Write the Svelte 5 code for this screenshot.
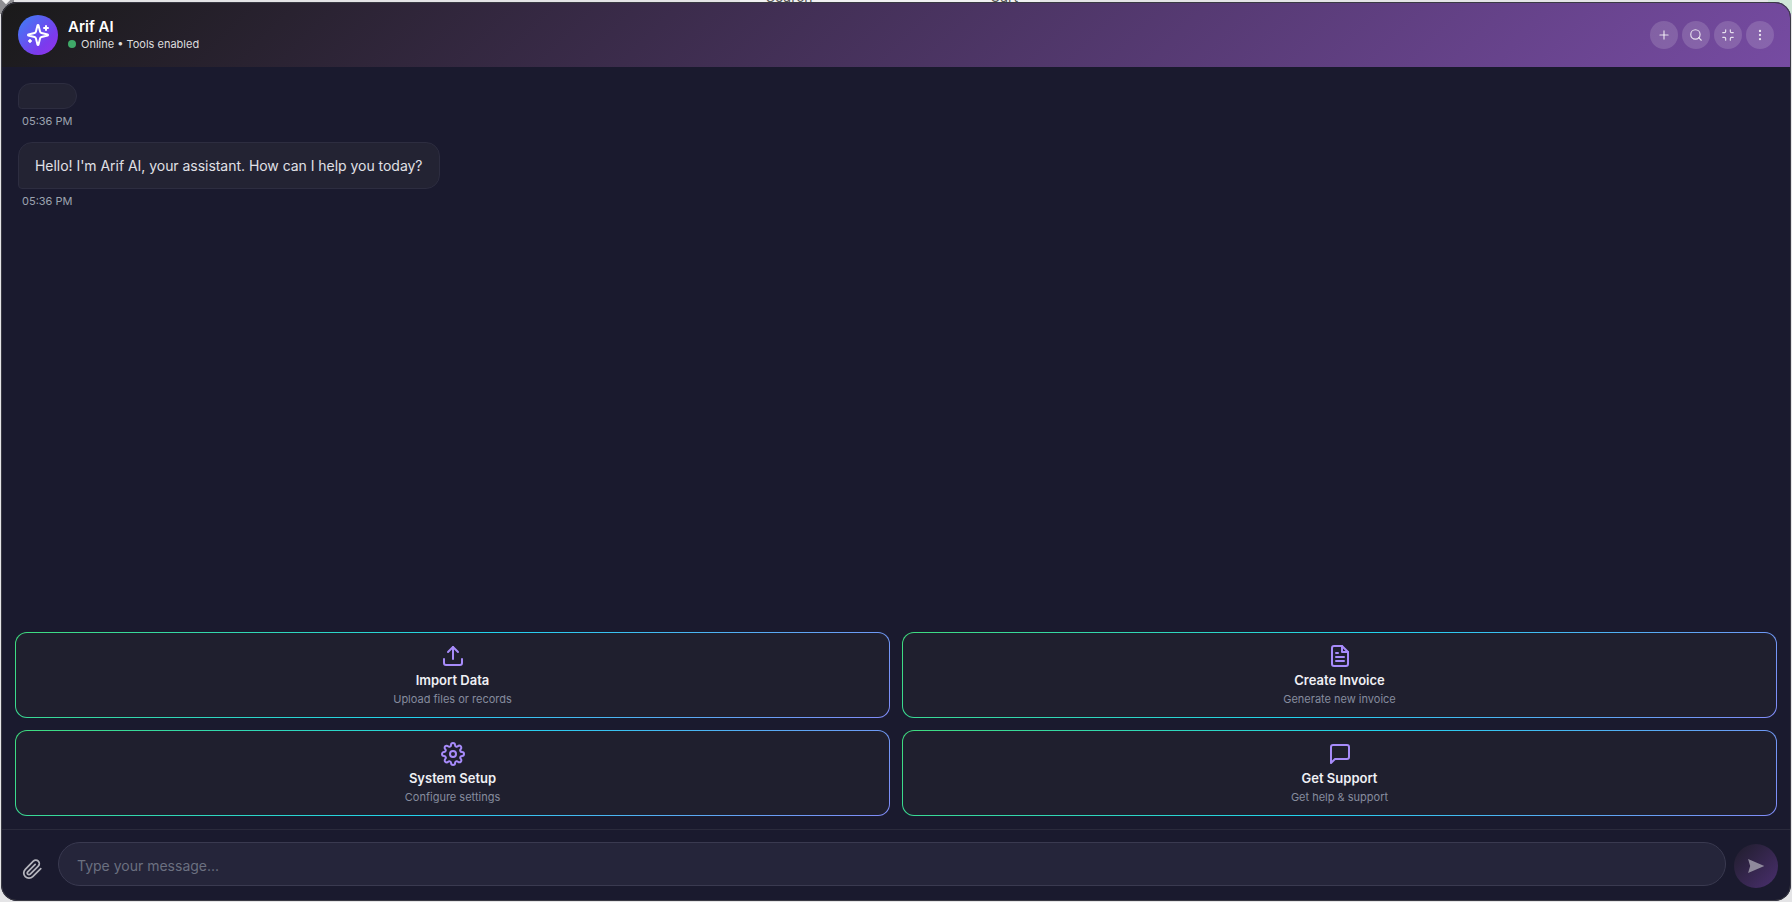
<script>
  const actions = [
    { id: "upload", title: "Import Data", sub: "Upload files or records" },
    { id: "invoice", title: "Create Invoice", sub: "Generate new invoice" },
    { id: "gear", title: "System Setup", sub: "Configure settings" },
    { id: "chat", title: "Get Support", sub: "Get help & support" }
  ];

  let draft = $state("");
</script>

<div class="page">
  <div class="behind" aria-hidden="true">
    <div class="strip">
      <span class="behind-link search">Search</span>
      <span class="behind-link cart">Cart</span>
    </div>
    <div class="corner-left"></div>
    <div class="corner-right"></div>
  </div>

  <div class="chat">
    <header class="head">
      <div class="who">
        <div class="avatar">
          <svg viewBox="0 0 24 24" width="24" height="24" fill="none" stroke="#fff" stroke-width="2" stroke-linecap="round" stroke-linejoin="round">
            <path d="M9.94 15.5A2 2 0 0 0 8.5 14.06l-6.14-1.58a.5.5 0 0 1 0-.96L8.5 9.94A2 2 0 0 0 9.94 8.5l1.58-6.14a.5.5 0 0 1 .96 0L14.06 8.5A2 2 0 0 0 15.5 9.94l6.14 1.58a.5.5 0 0 1 0 .96L15.5 14.06a2 2 0 0 0-1.44 1.44l-1.58 6.14a.5.5 0 0 1-.96 0z"/>
            <path d="M20 3v4"/><path d="M22 5h-4"/><path d="M4 17v2"/><path d="M5 18H3"/>
          </svg>
        </div>
        <div class="who-text">
          <div class="name">Arif AI</div>
          <div class="status"><span class="dot"></span>Online • Tools enabled</div>
        </div>
      </div>
      <div class="tools">
        <button class="tool" aria-label="New chat">
          <svg viewBox="0 0 24 24" width="14" height="14" fill="none" stroke="currentColor" stroke-width="2" stroke-linecap="round"><path d="M5 12h14"/><path d="M12 5v14"/></svg>
        </button>
        <button class="tool" aria-label="Search">
          <svg viewBox="0 0 24 24" width="14" height="14" fill="none" stroke="currentColor" stroke-width="2" stroke-linecap="round"><circle cx="11" cy="11" r="8"/><path d="m21 21-4.35-4.35"/></svg>
        </button>
        <button class="tool" aria-label="Minimize">
          <svg viewBox="0 0 24 24" width="14" height="14" fill="none" stroke="currentColor" stroke-width="2" stroke-linecap="round" stroke-linejoin="round"><path d="M8 3v3a2 2 0 0 1-2 2H3"/><path d="M21 8h-3a2 2 0 0 1-2-2V3"/><path d="M3 16h3a2 2 0 0 1 2 2v3"/><path d="M16 21v-3a2 2 0 0 1 2-2h3"/></svg>
        </button>
        <button class="tool" aria-label="More">
          <svg viewBox="0 0 24 24" width="14" height="14" fill="none" stroke="currentColor" stroke-width="2" stroke-linecap="round"><circle cx="12" cy="5" r="1"/><circle cx="12" cy="12" r="1"/><circle cx="12" cy="19" r="1"/></svg>
        </button>
      </div>
    </header>

    <main class="messages">
      <div class="msg">
        <div class="bubble empty"></div>
        <div class="time">05:36 PM</div>
      </div>
      <div class="msg">
        <div class="bubble">Hello! I'm Arif AI, your assistant. How can I help you today?</div>
        <div class="time">05:36 PM</div>
      </div>
    </main>

    <section class="actions">
      {#each actions as a (a.id)}
        <button class="card">
          <svg class="card-icon" viewBox="0 0 24 24" width="24" height="24" fill="none" stroke="currentColor" stroke-width="2" stroke-linecap="round" stroke-linejoin="round">
            {#if a.id === "upload"}
              <path d="M21 15v4a2 2 0 0 1-2 2H5a2 2 0 0 1-2-2v-4"/><path d="M17 8l-5-5-5 5"/><path d="M12 3v12"/>
            {:else if a.id === "invoice"}
              <path d="M14 2H6a2 2 0 0 0-2 2v16a2 2 0 0 0 2 2h12a2 2 0 0 0 2-2V8z"/><path d="M14 2v6h6"/><path d="M16 13H8"/><path d="M16 17H8"/><path d="M10 9H8"/>
            {:else if a.id === "gear"}
              <circle cx="12" cy="12" r="3"/><path d="M19.4 15a1.65 1.65 0 0 0 .33 1.82l.06.06a2 2 0 0 1 0 2.83 2 2 0 0 1-2.83 0l-.06-.06a1.65 1.65 0 0 0-1.82-.33 1.65 1.65 0 0 0-1 1.51V21a2 2 0 0 1-2 2 2 2 0 0 1-2-2v-.09A1.65 1.65 0 0 0 9 19.4a1.65 1.65 0 0 0-1.82.33l-.06.06a2 2 0 0 1-2.83 0 2 2 0 0 1 0-2.83l.06-.06a1.65 1.65 0 0 0 .33-1.82 1.65 1.65 0 0 0-1.51-1H3a2 2 0 0 1-2-2 2 2 0 0 1 2-2h.09A1.65 1.65 0 0 0 4.6 9a1.65 1.65 0 0 0-.33-1.82l-.06-.06a2 2 0 0 1 0-2.83 2 2 0 0 1 2.83 0l.06.06a1.65 1.65 0 0 0 1.82.33H9a1.65 1.65 0 0 0 1-1.51V3a2 2 0 0 1 2-2 2 2 0 0 1 2 2v.09a1.65 1.65 0 0 0 1 1.51 1.65 1.65 0 0 0 1.82-.33l.06-.06a2 2 0 0 1 2.83 0 2 2 0 0 1 0 2.83l-.06.06a1.65 1.65 0 0 0-.33 1.82V9a1.65 1.65 0 0 0 1.51 1H21a2 2 0 0 1 2 2 2 2 0 0 1-2 2h-.09a1.65 1.65 0 0 0-1.51 1z"/>
            {:else}
              <path d="M21 15a2 2 0 0 1-2 2H7l-4 4V5a2 2 0 0 1 2-2h14a2 2 0 0 1 2 2z"/>
            {/if}
          </svg>
          <span class="card-title">{a.title}</span>
          <span class="card-sub">{a.sub}</span>
        </button>
      {/each}
    </section>

    <footer class="composer">
      <button class="attach" aria-label="Attach file">
        <svg viewBox="0 0 24 24" width="21" height="21" fill="none" stroke="currentColor" stroke-width="2" stroke-linecap="round" stroke-linejoin="round"><path d="M21.44 11.05l-9.19 9.19a6 6 0 0 1-8.49-8.49l9.19-9.19a4 4 0 0 1 5.66 5.66l-9.2 9.19a2 2 0 0 1-2.83-2.83l8.49-8.48"/></svg>
      </button>
      <input class="field" placeholder="Type your message..." bind:value={draft} />
      <button class="send" aria-label="Send">
        <svg viewBox="0 0 24 24" width="20" height="20" fill="currentColor"><path d="M2.5 3.5 22 12 2.5 20.5 5 12z"/></svg>
      </button>
    </footer>
  </div>
</div>

<style>
  :global(body) {
    margin: 0;
    background: #e4e4e6;
    font-family: Inter, "Liberation Sans", sans-serif;
  }

  .page {
    position: relative;
    width: 1792px;
    height: 902px;
    overflow: hidden;
    padding: 2px 1px 1px 1px;
    box-sizing: border-box;
  }

  /* bits of the host page that peek out above the widget */
  .behind {
    position: absolute;
    inset: 0;
  }
  .strip {
    position: absolute;
    top: 0;
    left: 740px;
    width: 300px;
    height: 3px;
    background: #f1f1f2;
    overflow: hidden;
  }
  .behind-link {
    position: absolute;
    top: -10px;
    font-size: 14px;
    line-height: 13px;
    color: #555;
  }
  .search { left: 26px; }
  .cart { left: 250px; }
  .corner-left {
    position: absolute;
    top: 0;
    left: 0;
    width: 14px;
    height: 14px;
    background: #8e8e92;
  }
  .corner-left::after {
    content: "";
    position: absolute;
    top: -3px;
    left: 3px;
    width: 6px;
    height: 6px;
    background: #f4f4f4;
    transform: rotate(45deg);
  }
  .corner-right {
    position: absolute;
    top: 0;
    right: 0;
    width: 24px;
    height: 14px;
    background: #cfe6d8;
  }

  .chat {
    position: relative;
    height: 100%;
    display: flex;
    flex-direction: column;
    background: #1a1a2e;
    border-radius: 16px;
    overflow: hidden;
    outline: 1px solid #3a3a44;
    outline-offset: -1px;
  }

  .head {
    height: 65px;
    flex: none;
    display: flex;
    align-items: center;
    justify-content: space-between;
    padding: 0 17px;
    background: linear-gradient(135deg, #1a1a1a 0%, #764ba2 100%);
  }
  .who {
    display: flex;
    align-items: center;
    gap: 10px;
  }
  .avatar {
    width: 40px;
    height: 40px;
    border-radius: 50%;
    display: flex;
    align-items: center;
    justify-content: center;
    background: linear-gradient(135deg, #3b82f6, #7c3aed 70%, #9333ea);
  }
  .who-text {
    display: flex;
    flex-direction: column;
    gap: 0;
    padding-bottom: 1px;
  }
  .name {
    color: #fff;
    font-size: 15px;
    font-weight: 600;
    line-height: 20px;
  }
  .status {
    display: flex;
    align-items: center;
    gap: 5px;
    font-size: 11px;
    line-height: 14px;
    color: rgba(255, 255, 255, 0.85);
  }
  .dot {
    width: 8px;
    height: 8px;
    border-radius: 50%;
    background: #3fa968;
  }
  .tools {
    display: flex;
    gap: 4px;
  }
  .tool {
    width: 28px;
    height: 28px;
    padding: 0;
    border: 0;
    border-radius: 50%;
    display: flex;
    align-items: center;
    justify-content: center;
    color: rgba(255, 255, 255, 0.8);
    background: rgba(255, 255, 255, 0.15);
  }

  .messages {
    flex: 1;
    min-height: 0;
    padding: 16px 17px;
    display: flex;
    flex-direction: column;
    gap: 14px;
  }
  .msg {
    display: flex;
    flex-direction: column;
    align-items: flex-start;
  }
  .bubble {
    box-sizing: border-box;
    padding: 12px 16px;
    font-size: 14px;
    line-height: 21px;
    letter-spacing: -0.035px;
    color: #e0e0e6;
    background: #232333;
    border: 1px solid #2d2d40;
    border-radius: 14px 14px 14px 4px;
  }
  .bubble.empty {
    width: 59px;
    height: 26px;
  }
  .time {
    margin: 5px 0 0 4px;
    font-size: 11px;
    line-height: 14px;
    color: #9ca3af;
  }

  .actions {
    flex: none;
    display: grid;
    grid-template-columns: 1fr 1fr;
    gap: 12px;
    padding: 0 14px 13px 14px;
    border-bottom: 1px solid #2a2a3c;
  }
  .card {
    height: 86px;
    box-sizing: border-box;
    padding: 11px 0 0;
    display: flex;
    flex-direction: column;
    align-items: center;
    border: 1px solid transparent;
    border-radius: 12px;
    background:
      linear-gradient(#1f1f2e, #1f1f2e) padding-box,
      linear-gradient(135deg, #3fdc7e, #22d3ee 50%, #818cf8) border-box;
    font-family: inherit;
  }
  .card-icon {
    color: #a78bfa;
    margin-bottom: 3px;
  }
  .card-title {
    font-size: 13px;
    font-weight: 600;
    line-height: 19px;
    color: #f0f0f5;
  }
  .card-sub {
    margin-top: 2px;
    font-size: 11px;
    line-height: 14px;
    color: #868c9e;
  }

  .composer {
    flex: none;
    display: flex;
    align-items: flex-start;
    gap: 8px;
    padding: 12px 13px 13px 15px;
    height: 71px;
    box-sizing: border-box;
  }
  .attach {
    width: 32px;
    height: 32px;
    margin: 11px 2px 0 0;
    padding: 0;
    border: 0;
    background: none;
    color: #b4b4bc;
    display: flex;
    align-items: center;
    justify-content: center;
  }
  .field {
    flex: 1;
    min-width: 0;
    height: 44px;
    box-sizing: border-box;
    padding: 2px 18px 0;
    font-family: inherit;
    font-size: 14px;
    color: #e0e0e6;
    background: #25253a;
    border: 1px solid #3a3a50;
    border-radius: 22px;
    outline: none;
  }
  .field::placeholder {
    color: #6b7080;
  }
  .send {
    width: 44px;
    height: 44px;
    margin-top: 2px;
    padding: 0;
    border: 0;
    border-radius: 50%;
    display: flex;
    align-items: center;
    justify-content: center;
    color: #8f8a9c;
    background: linear-gradient(135deg, #1f1d2b, #4a2f6e);
  }
</style>
